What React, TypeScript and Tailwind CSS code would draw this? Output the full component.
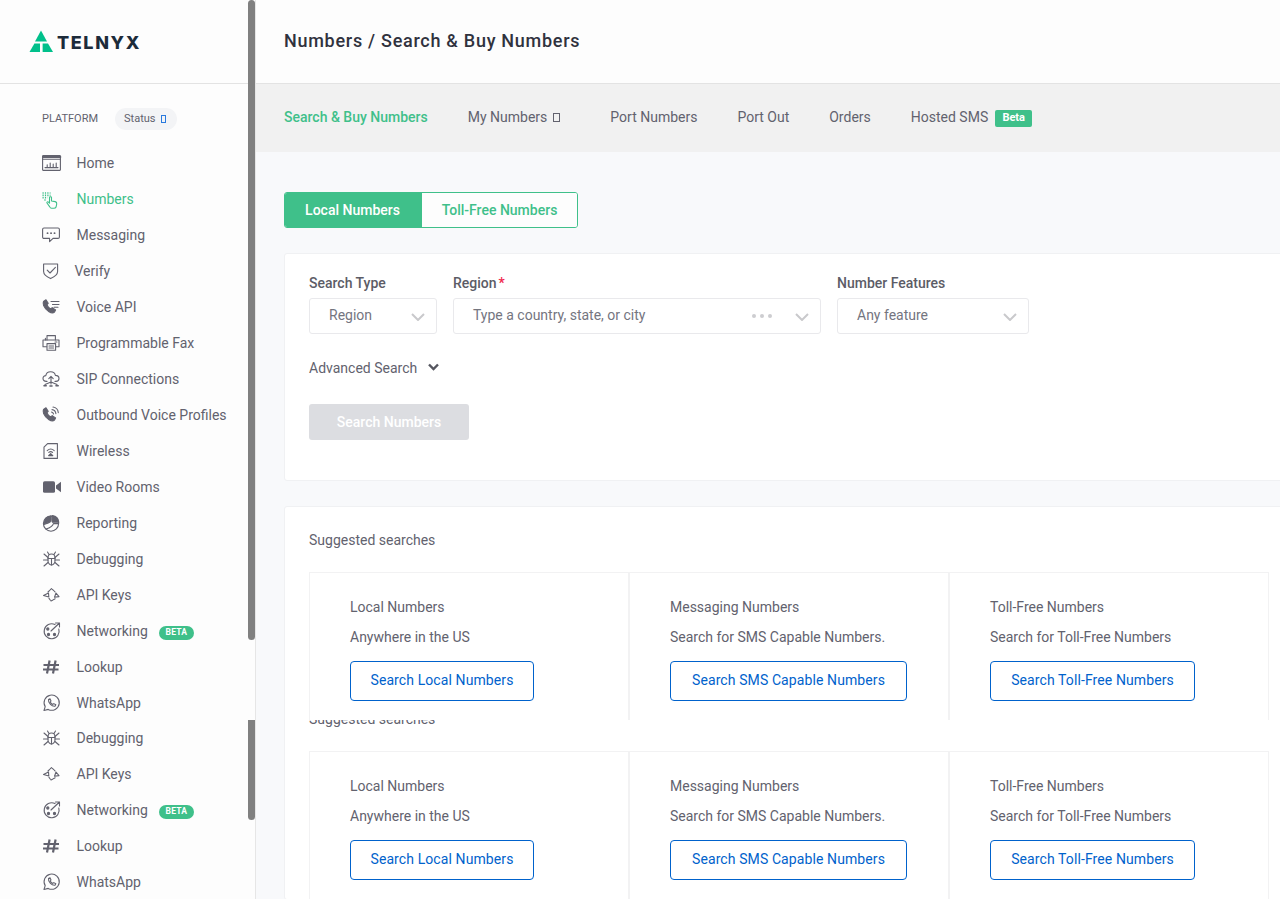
import type { ReactNode } from 'react';

const INK = '#62626e';

function Ico({ children, w = 20 }: { children: ReactNode; w?: number }) {
  return (
    <svg width={w} height="20" viewBox={`0 0 ${w} 20`} fill="none" stroke={INK} strokeWidth="1.1" strokeLinecap="round" strokeLinejoin="round" className="shrink-0">
      {children}
    </svg>
  );
}

const phone = 'M1.5 4.5 L4 2.8 L6.2 6.4 L4.9 7.8 C5.6 9.6 7 11 8.8 11.9 L10.2 10.6 L13.6 12.9 L12.4 15.2 C11 16.4 9 16 7 14.8 C4.6 13.4 2.6 11 1.6 8.6 C1.1 7.2 1 5.6 1.5 4.5 Z';

const bug = (
  <Ico>
    <path d="M6 9 C6 6 8 5 9.5 5 C11 5 13 6 13 9 V12 C13 14.5 11 16 9.5 16 C8 16 6 14.5 6 12 Z" />
    <path d="M6 9.5 H13 M9.5 9.5 V16 M2 5 L6 8.5 M17 5 L13 8.5 M1.5 11 H6 M17.5 11 H13 M2 17 L6 13.5 M17 17 L13 13.5 M7 5.5 L5.5 3 M12 5.5 L13.5 3" />
  </Ico>
);
const keys = (
  <Ico>
    <path d="M1.5 10.5 L6.5 8 L6.8 12 Z M12.5 12.2 L17 11.6 L14 8 Z" />
    <path d="M6 7 L9.5 3.6 L13 6.8 M7 13.4 L9 16 L13.4 13.6" strokeDasharray="2 1" />
  </Ico>
);
const network = (
  <Ico>
    <path d="M13 3.6 A7.5 7.5 0 1 0 16.8 8" />
    <path d="M17.5 2 L9 10 M13.5 2 H17.5 V6" />
    <circle cx="5.8" cy="8" r="1.1" fill={INK} />
    <circle cx="6.5" cy="13.5" r="1.1" fill={INK} />
    <circle cx="12.5" cy="13.5" r="1.1" fill={INK} />
  </Ico>
);
const hash = (
  <Ico>
    <path d="M7.6 3.5 L5 16.5 M13.6 3.5 L11 16.5 M1.5 8 H17 M1 12.5 H16.5" strokeWidth="2.2" strokeLinecap="butt" />
  </Ico>
);
const whatsapp = (
  <Ico>
    <path d="M2 17.5 L3.2 13.6 A7.6 7.6 0 1 1 6.2 16.4 Z" />
    <path d="M6.5 6.5 L8 5.8 L9 8 L8.2 9 C8.7 10 9.6 10.9 10.8 11.4 L11.8 10.6 L13.8 11.8 L13 13.2 C10 13.8 6 10 6.5 6.5 Z" />
  </Ico>
);

const NAV_ITEMS: { label: string; icon: ReactNode; active?: boolean; beta?: boolean; tight?: boolean }[] = [
  {
    label: 'Home',
    icon: (
      <Ico>
        <rect x="0.6" y="2.6" width="17.8" height="14.8" rx="0.6" />
        <path d="M0.6 4 H18.4" strokeWidth="1.8" />
        <path d="M0.6 6.2 H18.4 M3 14.6 H16 M5.2 14 V11.8 M8.2 14 V10 M11.2 14 V11 M14.2 14 V10" />
      </Ico>
    ),
  },
  {
    label: 'Numbers',
    active: true,
    icon: (
      <svg width="20" height="20" viewBox="0 0 20 20" fill="none" stroke="#3fc08a" strokeWidth="1.1" strokeLinecap="round" strokeLinejoin="round" className="shrink-0">
        <path d="M0.5 4 H8.5 M0.5 6.4 H8.5 M0.5 8.8 H5.5 M2.4 11 H4.6" strokeWidth="1.6" strokeDasharray="1.2 1.2" strokeLinecap="butt" />
        <path d="M7.6 17.6 L5 14 C4.5 13 5.7 12.4 6.5 13.2 L7.5 14.2 V8.6 C7.5 7.4 9.5 7.4 9.5 8.6 V12 L13.2 12.6 C14.5 13 14.9 14 14.7 15 L14.1 18 C13.7 19 12.7 19.2 11.7 19.2 H9.6 C8.6 19.2 8.1 18.8 7.6 17.6 Z" />
      </svg>
    ),
  },
  {
    label: 'Messaging',
    icon: (
      <Ico>
        <path d="M2 3 H16 C16.8 3 17.4 3.6 17.4 4.4 V12 C17.4 12.8 16.8 13.4 16 13.4 H11 L7.6 16.6 V13.4 H2 C1.2 13.4 0.6 12.8 0.6 12 V4.4 C0.6 3.6 1.2 3 2 3 Z" />
        <path d="M5.5 8.2 H5.6 M9 8.2 H9.1 M12.5 8.2 H12.6" strokeWidth="1.8" />
      </Ico>
    ),
  },
  {
    label: 'Verify',
    icon: (
      <Ico>
        <path d="M1.6 3 H15.6 V10.5 C15.6 13.5 12 16 8.6 17.6 C5.2 16 1.6 13.5 1.6 10.5 Z" />
        <path d="M5.2 9.2 L8 12 L13.4 6.4" />
      </Ico>
    ),
  },
  {
    label: 'Voice API',
    icon: (
      <Ico>
        <path d={phone} fill={INK} />
        <path d="M9 4.5 H17 M10.5 7.5 H17 M12 10.2 H16" />
      </Ico>
    ),
  },
  {
    label: 'Programmable Fax',
    icon: (
      <Ico>
        <path d="M5 7 V2.6 H13.4 V7" />
        <path d="M4.6 13.8 H1 V7 H17 V13.8 H14" />
        <rect x="5" y="10.6" width="8.6" height="6.6" />
        <path d="M3.4 5.4 V7 M7 13 H11.6 M7 15 H11.6 M13 9 H15" />
      </Ico>
    ),
  },
  {
    label: 'SIP Connections',
    icon: (
      <Ico>
        <path d="M5 12.4 H4.2 C2.2 12.4 1 11 1 9.4 C1 7.8 2.2 6.6 3.8 6.6 C4.2 4.2 6.4 2.8 8.6 2.8 C11 2.8 13 4.4 13.4 6.4 C15.4 6.4 17 7.6 17 9.6 C17 11.2 15.6 12.4 14 12.4 H13" />
        <path d="M9 15 V7.6 M6.8 9.6 L9 7.4 L11.2 9.6 M9 13 L3 15.6 M9 13 L15 15.6" />
        <path d="M2 16.8 H4.2 M14 16.8 H16.2 M8 17 H10" strokeWidth="1.6" />
      </Ico>
    ),
  },
  {
    label: 'Outbound Voice Profiles',
    icon: (
      <Ico>
        <path d={phone} fill={INK} />
        <path d="M9.5 7 C10.6 7.2 11.2 7.8 11.5 9 M10 4.6 C12 4.8 13.6 6.4 13.9 8.6 M11 2 C13.8 2.4 16 4.6 16.3 7.6" />
      </Ico>
    ),
  },
  {
    label: 'Wireless',
    icon: (
      <Ico>
        <path d="M5.6 2.6 H15.4 V17.4 H2 V6.2 Z" />
        <path d="M5.2 9.6 C7.4 7.6 10 7.6 12.2 9.6 M6.8 11.4 C8 10.4 9.4 10.4 10.6 11.4" />
        <path d="M6.6 14.6 L8.7 12.6 L10.8 14.6 Z" fill={INK} />
      </Ico>
    ),
  },
  {
    label: 'Video Rooms',
    icon: (
      <svg width="20" height="20" viewBox="0 0 20 20" fill={INK} className="shrink-0">
        <rect x="1" y="4.2" width="12" height="11.6" rx="1.6" />
        <path d="M14 8.4 L19 4.8 V15.2 L14 11.6 Z" />
      </svg>
    ),
  },
  {
    label: 'Reporting',
    icon: (
      <Ico>
        <path d="M9 3 A7.6 7.6 0 1 0 16.6 10.6" />
        <path d="M1.6 11.6 C4.4 10.8 7.4 10.2 9 8.4 V3 A7.6 7.6 0 0 1 16.6 10.6 H11.4 C10.8 13 7.4 15 4 16" />
        <path d="M10.4 2.6 A7.4 7.4 0 0 1 16.8 9.2 H10.4 Z" fill={INK} />
        <path d="M2 10.4 C4.6 10.4 7.6 9.4 9 7 V3 A7.6 7.6 0 0 0 2 10.4 Z" fill={INK} />
      </Ico>
    ),
  },
  { label: 'Debugging', icon: bug },
  { label: 'API Keys', icon: keys },
  { label: 'Networking', icon: network, beta: true },
  { label: 'Lookup', icon: hash },
  { label: 'WhatsApp', icon: whatsapp },
  { label: 'Debugging', icon: bug, tight: true },
  { label: 'API Keys', icon: keys },
  { label: 'Networking', icon: network, beta: true },
  { label: 'Lookup', icon: hash },
  { label: 'WhatsApp', icon: whatsapp },
];

const TOP_TABS = ['My Numbers', 'Port Numbers', 'Port Out', 'Orders', 'Hosted SMS'];

const SUGGESTIONS = [
  { title: 'Local Numbers', text: 'Anywhere in the US', cta: 'Search Local Numbers', width: 'w-[184px]' },
  { title: 'Messaging Numbers', text: 'Search for SMS Capable Numbers.', cta: 'Search SMS Capable Numbers', width: 'w-[237px]' },
  { title: 'Toll-Free Numbers', text: 'Search for Toll-Free Numbers', cta: 'Search Toll-Free Numbers', width: 'w-[205px]' },
];

function Chevron({ className }: { className: string }) {
  return (
    <svg width="14" height="8" viewBox="0 0 14 8" fill="none" stroke="#c9c9cc" strokeWidth="2" className={className}>
      <path d="M1 1 L7 7 L13 1" />
    </svg>
  );
}

function Logo() {
  return (
    <div className="flex items-center">
      <svg width="25" height="23" viewBox="0 0 25 23" fill="#00c08b" className="shrink-0">
        <path d="M12 0.5 L18 11.5 H6 Z" />
        <path d="M5.4 13.5 H11 V22 H0.5 Z" />
        <path d="M13.6 13.5 H19 L24 22 H13.6 Z" />
      </svg>
      <span className="mt-[3px] ml-[3px] font-['Inter',sans-serif] text-[18px] leading-none font-extrabold tracking-[1.6px] text-[#1c2b3a]">TELNYX</span>
    </div>
  );
}

function Sidebar() {
  return (
    <aside className="relative flex h-full w-[256px] shrink-0 flex-col overflow-hidden border-r border-[#e6e6e6] bg-[#fdfdfd]">
      <div className="flex h-[84px] shrink-0 items-center border-b border-[#e3e3e3] pb-[1px] pl-[29px]">
        <Logo />
      </div>
      <div className="mt-[24px] flex h-[22px] shrink-0 items-center pl-[42px]">
        <span className="text-[11px] text-[#62626e]">PLATFORM</span>
        <span className="ml-[17px] flex h-[22px] w-[62px] items-center rounded-full bg-[#f3f4f6] pl-[9px] text-[11px] text-[#62626e]">
          Status<span className="ml-[5px] inline-block h-[8px] w-[5px] border border-[#2a7ade]" />
        </span>
      </div>
      <nav className="mt-[15px] flex flex-col pl-[42px] text-[14px]">
        {NAV_ITEMS.map((item, i) => (
          <div key={i} className={`flex h-[36px] shrink-0 items-center ${item.tight ? '-mt-px' : ''}`}>
            <span className="flex w-[34.5px] shrink-0 items-center">{item.icon}</span>
            <span className={`${item.active ? 'text-[#3fc08a]' : 'text-[#62626e]'} ${item.label === 'Verify' ? '-ml-[2px]' : ''}`}>{item.label}</span>
            {item.beta && (
              <span className="mt-[3px] ml-[11px] flex h-[14px] w-[35px] items-center justify-center rounded-full bg-[#3fc08a] text-[8.5px] font-bold tracking-[0.2px] text-white">BETA</span>
            )}
          </div>
        ))}
      </nav>
      {/* overlay scrollbar thumbs */}
      <div className="absolute top-0 right-0 h-[640px] w-[7px] rounded-[4px] bg-[#808080]" />
      <div className="absolute top-[720px] right-0 h-[100px] w-[7px] rounded-b-[4px] bg-[#808080]" />
    </aside>
  );
}

function Field({ label, required, width, text, dots }: { label: string; required?: boolean; width: string; text: string; dots?: boolean }) {
  return (
    <div className={width}>
      <div className="mb-[5px] h-[20px] text-[14px] leading-[20px] font-medium text-[#5c5c66]">
        {label}
        {required && <span className="ml-[2px] text-[#f0274b]">*</span>}
      </div>
      <div className="flex h-[36px] items-center rounded-[3px] border border-[#e9e9ec] bg-white pr-[11px] pl-[19px] text-[14px] text-[#74757f]">
        <span className="-mt-[2px] flex-1">{text}</span>
        {dots && (
          <span className="mr-[23px] flex gap-[4px]">
            <span className="h-[4px] w-[4px] rounded-full bg-[#cdcdd0]" />
            <span className="h-[4px] w-[4px] rounded-full bg-[#cdcdd0]" />
            <span className="h-[4px] w-[4px] rounded-full bg-[#cdcdd0]" />
          </span>
        )}
        <Chevron className="mt-[2px]" />
      </div>
    </div>
  );
}

function SuggestionGrid({ top }: { top?: boolean }) {
  return (
    <div className={`grid h-[148px] grid-cols-[320px_320px_320px] overflow-hidden ${top ? 'relative z-10 bg-white' : ''}`}>
      {SUGGESTIONS.map((s) => (
        <div key={s.title} className="h-[160px] border border-[#f2f2f3] pt-[24px] pl-[40px] text-[14px] leading-[20px] text-[#62626e]">
          <div className="mb-[10px]">{s.title}</div>
          <div className="mb-[14px]">{s.text}</div>
          <button className={`h-[40px] rounded-[4px] border border-[#0062cc] bg-white pb-[2px] text-[14px] tracking-[0.1px] text-[#0062cc] ${s.width}`}>{s.cta}</button>
        </div>
      ))}
    </div>
  );
}

export default function App() {
  return (
    <div className="flex h-[899px] w-[1280px] overflow-hidden bg-[#f8f9fb] font-['Roboto',sans-serif]">
      <Sidebar />
      <div className="flex min-w-0 flex-1 flex-col overflow-hidden">
        {/* Title bar */}
        <header className="flex h-[84px] shrink-0 items-center border-b border-[#e3e3e3] bg-[#fdfdfd] pb-[2px] pl-[28px]">
          <h1 className="text-[18px] font-medium tracking-[0.72px] text-[#30323e]">Numbers / Search &amp; Buy Numbers</h1>
        </header>

        {/* Tab nav */}
        <div className="flex h-[68px] shrink-0 items-center gap-[40px] bg-[#f1f1f1] pb-[2px] pl-[28px] text-[14px] text-[#62626e]">
          <span className="font-medium text-[#3fc08a]">Search &amp; Buy Numbers</span>
          {TOP_TABS.map((t) => (
            <span key={t} className="flex items-center">
              {t}
              {t === 'My Numbers' && <span className="mr-[10px] ml-[6px] inline-block h-[9px] w-[7px] border border-[#62626e]" />}
              {t === 'Hosted SMS' && (
                <span className="mt-[2px] ml-[7px] flex h-[17px] w-[37px] items-center justify-center rounded-[2px] bg-[#3fc08a] text-[11px] font-bold text-white">Beta</span>
              )}
            </span>
          ))}
        </div>

        <div className="pt-[40px] pl-[28px]">
          {/* Local / toll-free switch */}
          <div className="flex h-[36px] w-[294px] overflow-hidden rounded-[3px] border border-[#3fc08a] text-[14px] font-medium">
            <span className="flex w-[137px] items-center justify-center bg-[#3fc08a] pr-[2px] text-white">Local Numbers</span>
            <span className="flex flex-1 items-center justify-center bg-[#fdfdfd] text-[#3fc08a]">Toll-Free Numbers</span>
          </div>

          {/* Search form */}
          <section className="mt-[25px] h-[228px] w-[1010px] rounded-[3px] border border-[#f0f1f3] bg-white pt-[19px] pl-[24px]">
            <div className="flex gap-[16px]">
              <Field label="Search Type" width="w-[128px]" text="Region" />
              <Field label="Region" required width="w-[368px]" text="Type a country, state, or city" dots />
              <Field label="Number Features" width="w-[192px]" text="Any feature" />
            </div>
            <div className="mt-[24px] flex h-[20px] items-center text-[14px] text-[#62626e]">
              Advanced Search
              <svg width="11" height="8" viewBox="0 0 11 8" fill="none" stroke="#55565f" strokeWidth="2.4" className="mb-[3px] ml-[11px]">
                <path d="M1 1.5 L5.5 6 L10 1.5" />
              </svg>
            </div>
            <button className="mt-[26px] h-[36px] w-[160px] rounded-[3px] bg-[#dcdde1] text-[14px] font-medium text-white">Search Numbers</button>
          </section>

          {/* Suggested searches */}
          <section className="mt-[25px] w-[1010px] rounded-[3px] border border-[#f0f1f3] bg-white pt-[23px] pl-[24px]">
            <div className="mb-[22px] h-[20px] text-[14px] leading-[20px] text-[#62626e]">Suggested searches</div>
            <SuggestionGrid top />
            <div className="-mt-[11px] mb-[22px] h-[20px] text-[14px] leading-[20px] text-[#62626e]">Suggested searches</div>
            <SuggestionGrid />
          </section>
        </div>
      </div>
    </div>
  );
}
